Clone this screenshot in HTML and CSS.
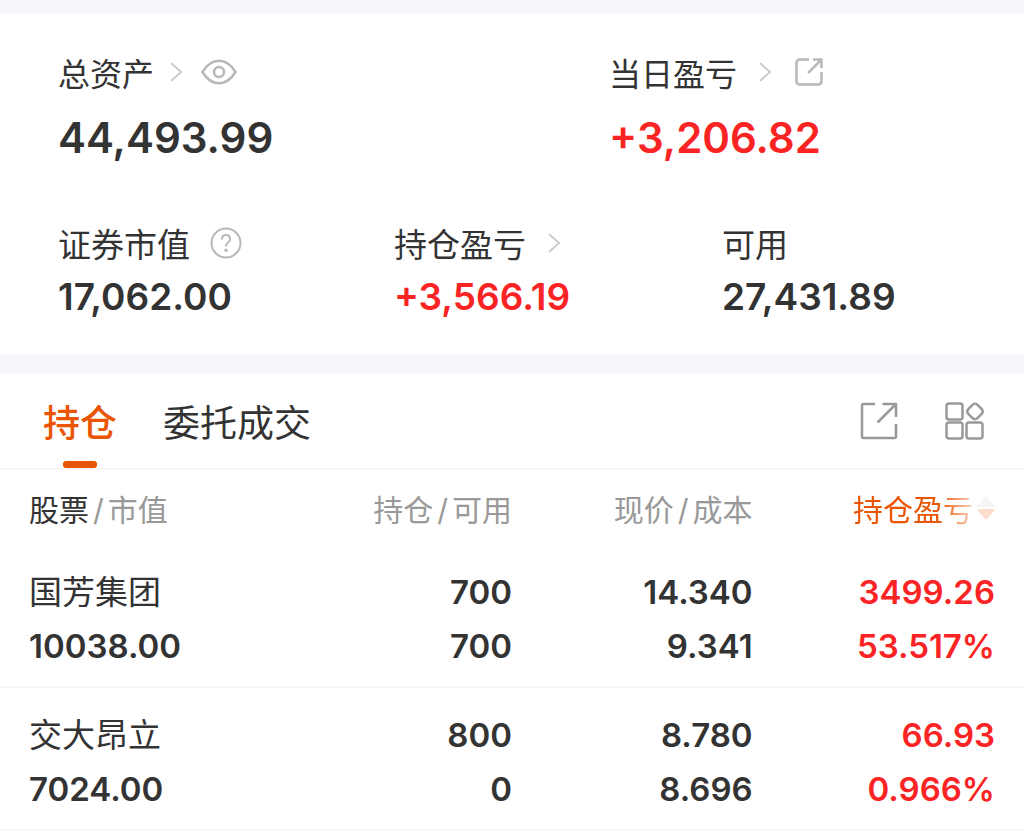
FILE: index.html
```
<!DOCTYPE html>
<html lang="zh-CN">
<head>
<meta charset="utf-8">
<meta name="viewport" content="width=device-width, initial-scale=1">
<title>持仓</title>
<link rel="stylesheet" href="styles.css">
</head>
<body>
<main class="page">
  <section class="summary">
    <dl class="totals">
      <div class="stat">
        <dt class="stat-label">总资产
          <svg class="chevron" viewBox="0 0 12 20"><path d="M1 1l10 9-10 9"/></svg>
          <button class="icon-button eye" aria-label="隐藏金额"><svg width="36" height="26" viewBox="0 0 36 26"><path d="M1.500 13C6 5.500 11.500 1.800 18 1.800S30 5.500 34.500 13C30 20.500 24.500 24.200 18 24.200S6 20.500 1.500 13z"/><circle cx="18" cy="13" r="5"/></svg></button>
        </dt>
        <dd class="stat-value large">44,493.99</dd>
      </div>
      <div class="stat">
        <dt class="stat-label">当日盈亏
          <svg class="chevron wide" viewBox="0 0 12 20"><path d="M1 1l10 9-10 9"/></svg>
          <button class="icon-button share" aria-label="分享当日盈亏"><svg width="28" height="28" viewBox="0 0 28 28"><path d="M14 1.500H5Q1.500 1.500 1.500 5v18Q1.500 26.500 5 26.500h18Q26.500 26.500 26.500 23v-9M18 1.500h8.500V10M26.500 1.500L13 15"/></svg></button>
        </dt>
        <dd class="stat-value large gain">+3,206.82</dd>
      </div>
    </dl>
    <dl class="details">
      <div class="stat">
        <dt class="stat-label">证券市值
          <button class="icon-button help" aria-label="说明"><svg width="32" height="32" viewBox="0 0 32 32"><circle cx="16" cy="16" r="14.500"/><path d="M11.800 12.500Q12 8 16 8T20.200 12.200Q20.200 14 18 15.500Q16 17 16 19.500"/><circle class="dot" cx="16" cy="23.200" r="1.700"/></svg></button>
        </dt>
        <dd class="stat-value">17,062.00</dd>
      </div>
      <div class="stat">
        <dt class="stat-label">持仓盈亏
          <svg class="chevron wide" viewBox="0 0 12 20"><path d="M1 1l10 9-10 9"/></svg>
        </dt>
        <dd class="stat-value gain">+3,566.19</dd>
      </div>
      <div class="stat">
        <dt class="stat-label">可用</dt>
        <dd class="stat-value">27,431.89</dd>
      </div>
    </dl>
  </section>

  <section class="holdings">
    <nav class="toolbar">
      <div class="tabs">
        <button class="tab active">持仓</button>
        <button class="tab">委托成交</button>
      </div>
      <div class="tools">
        <button class="icon-button tool" aria-label="分享持仓"><svg width="38" height="38" viewBox="0 0 38 38"><path d="M15 2H3.500Q2 2 2 3.500v31Q2 36 3.500 36h31Q36 36 36 34.500V22M22.500 2H36v13M36 2L17.500 20.500"/></svg></button>
        <button class="icon-button tool" aria-label="更多功能"><svg width="40" height="38" viewBox="0 0 40 38"><rect x="1.500" y="1.500" width="16" height="16" rx="2.500"/><rect x="1.500" y="20.500" width="16" height="16" rx="2.500"/><rect x="21.500" y="20.500" width="16" height="16" rx="2.500"/><rect x="23.500" y="3" width="13" height="13" rx="3.500" transform="rotate(45 30 9.500)"/></svg></button>
      </div>
    </nav>
    <table class="positions">
      <colgroup><col class="col-name"><col class="col-qty"><col class="col-price"><col class="col-profit"></colgroup>
      <thead>
        <tr>
          <th><span class="strong">股票</span><span class="slash">/</span>市值</th>
          <th>持仓<span class="slash">/</span>可用</th>
          <th>现价<span class="slash">/</span>成本</th>
          <th><button class="sort">持仓盈亏<svg width="18" height="24" viewBox="0 0 18 24"><path class="up" d="M9 0l8 9q1 2-1 2H2q-2 0-1-2z"/><path class="down" d="M9 24l8-9q1-2-1-2H2q-2 0-1 2z"/></svg></button></th>
        </tr>
      </thead>
      <tbody>
        <tr>
          <td><div class="name">国芳集团</div><div>10038.00</div></td>
          <td><div>700</div><div>700</div></td>
          <td><div>14.340</div><div>9.341</div></td>
          <td class="gain"><div>3499.26</div><div>53.517%</div></td>
        </tr>
        <tr>
          <td><div class="name">交大昂立</div><div>7024.00</div></td>
          <td><div>800</div><div>0</div></td>
          <td><div>8.780</div><div>8.696</div></td>
          <td class="gain"><div>66.93</div><div>0.966%</div></td>
        </tr>
      </tbody>
    </table>
  </section>
</main>
</body>
</html>
```
FILE: styles.css
```
* { box-sizing: border-box; }

body {
  margin: 0;
  background: #fff;
  color: #333;
  font-family: Inter, "Noto Sans CJK SC", sans-serif;
}

button {
  padding: 0;
  border: 0;
  background: none;
  color: inherit;
  font: inherit;
  cursor: pointer;
}

svg { display: block; fill: none; }

dl, dd { margin: 0; }

/* Account summary */
.summary {
  border-top: 14px solid #f6f7fa;
  border-bottom: 19px solid #f6f7fa;
  padding: 33px 0 28px 58px;
}

.totals, .details { display: grid; }
.totals { grid-template-columns: 551fr 415fr; }
.details { grid-template-columns: 336fr 328fr 302fr; margin-top: 49px; }

.stat-label {
  display: flex;
  align-items: center;
  height: 50px;
  font-size: 33px;
  white-space: nowrap;
}

.totals .stat-label { font-size: 32px; }

.stat-value {
  height: 59px;
  font-size: 37px;
  font-weight: 600;
  line-height: 58px;
}

.stat-value.large {
  height: 72px;
  font-size: 42px;
  line-height: 82px;
}

.gain { color: #fa2424; }

.chevron {
  width: 12px;
  height: 20px;
  margin-left: 16px;
  stroke: #ccc;
  stroke-width: 2;
}

.chevron.wide { margin-left: 22px; }

.icon-button svg {
  stroke: #b8b8b8;
  stroke-width: 2.5;
  stroke-linejoin: round;
}

.eye { margin-left: 19px; }
.share { margin-left: 24px; }
.help { margin-left: 20px; }
.help svg { stroke-width: 2; }
.help .dot { fill: #b8b8b8; stroke: none; }

/* Tabs */
.toolbar {
  display: flex;
  justify-content: space-between;
  height: 96px;
  padding: 0 39px 0 43px;
  border-bottom: 2px solid #f6f6f7;
}

.tabs { display: flex; gap: 46px; }

.tab {
  position: relative;
  font-size: 37px;
}

.tab.active { color: #ea5504; font-weight: 500; }

.tab.active::after {
  content: "";
  position: absolute;
  bottom: 0;
  left: 50%;
  width: 34px;
  height: 7px;
  margin-left: -17px;
  border-radius: 3px;
  background: #ea5504;
}

.tools { display: flex; align-items: center; gap: 47px; }
.tool svg { stroke: #999; }

/* Positions */
.positions {
  width: 100%;
  border-collapse: collapse;
  table-layout: fixed;
}

.col-name { width: 30%; }
.col-qty { width: 20%; }
.col-price { width: 23.5%; }

.positions th {
  height: 75px;
  padding: 0;
  color: #999;
  font-size: 30px;
  font-weight: 400;
  text-align: right;
  white-space: nowrap;
}

.positions td {
  padding: 20px 0 13px;
  border-bottom: 2px solid #f6f6f7;
  font-size: 33px;
  font-weight: 600;
  line-height: 54px;
  text-align: right;
}

.positions th:first-child,
.positions td:first-child { padding-left: 29px; text-align: left; }

.positions th:last-child,
.positions td:last-child { padding-right: 29px; }

.positions .name { height: 54px; font-weight: 400; }

.strong { color: #333; }
.slash { padding: 0 4px; }

.sort {
  display: inline-flex;
  align-items: center;
  gap: 4px;
  color: #ea5504;
  vertical-align: middle;
  mask-image: linear-gradient(to right, #000 60%, rgba(0, 0, 0, 0.2) 86%);
}

.sort .up { fill: #ccc; }
.sort .down { fill: #ea5504; }
```
